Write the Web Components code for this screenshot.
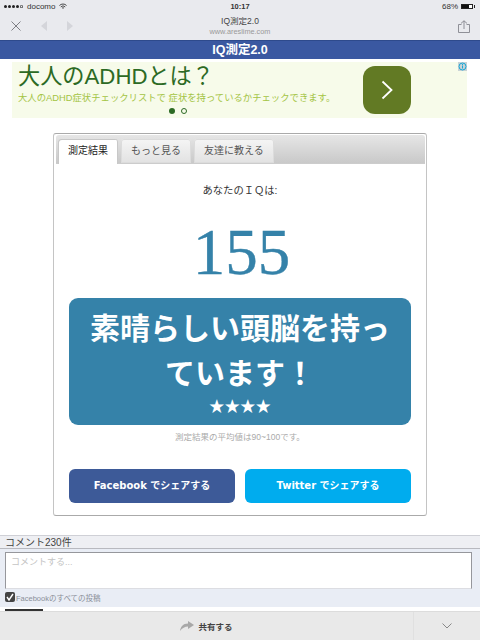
<!DOCTYPE html>
<html lang="ja">
<head>
<meta charset="utf-8">
<title>IQ測定2.0</title>
<style>
  html, body { margin: 0; height: 640px; overflow: hidden; background: #fff; }
  body { font-family: "Liberation Sans", "Noto Sans CJK JP", sans-serif; }
</style>
</head>
<body>
<browser-bar></browser-bar>
<site-title>IQ測定2.0</site-title>
<ad-banner></ad-banner>
<result-card score="155" message="素晴らしい頭脳を持っています！" stars="★★★★"></result-card>
<comment-box count="230"></comment-box>
<share-bar></share-bar>

<script>
const FONT = `"Liberation Sans", "Noto Sans CJK JP", sans-serif`;

class BrowserBar extends HTMLElement {
  constructor() {
    super();
    this.attachShadow({ mode: "open" });
    this.shadowRoot.innerHTML = /* html */`
    <style>
      :host { display: block; height: 40px; background: #e9eaee; color: #333; font-family: ${FONT}; }
      .status { height: 13px; display: grid; grid-template-columns: 1fr auto 1fr; align-items: center; padding: 0 4px 0 4px; font-size: 8px; }
      .left { display: flex; align-items: center; gap: 4px; }
      .dots { display: flex; gap: 1px; }
      .dots i { width: 3px; height: 3px; border-radius: 50%; background: #222; }
      .dots i.off { background: none; box-shadow: inset 0 0 0 .6px #222; }
      .right { display: flex; justify-content: flex-end; align-items: center; gap: 3px; }
      .battery { width: 12px; height: 5px; border: 1px solid #222; box-sizing: border-box; background: linear-gradient(90deg, #111 72%, #fff 72%); margin-right: 3px; position: relative; }
      .battery::after { content: ""; position: absolute; right: -3px; top: 0; width: 1px; height: 3px; background: #222; }
      .time { font-size: 7.5px; font-weight: bold; }
      .nav { height: 27px; display: grid; grid-template-columns: 1fr auto 1fr; align-items: start; }
      .icons { display: flex; align-items: center; padding: 8px 0 0 11px; gap: 20px; }
      .title { text-align: center; font-size: 8.5px; line-height: 11px; color: #444; padding-top: 3px; }
      .title small { display: block; font-size: 7.3px; line-height: 9px; color: #999; }
      .up { justify-self: end; padding: 7px 10px 0 0; }
      svg { display: block; }
    </style>
    <div class="status">
      <div class="left">
        <div class="dots"><i></i><i></i><i></i><i></i><i class="off"></i></div>
        <span>docomo</span>
        <svg width="8" height="7" viewBox="0 0 9 7" fill="none" stroke="#222" stroke-width=".9"><path d="M.5 2.4a5.600 5.600 0 0 1 8 0M2 4a3.500 3.500 0 0 1 5 0M3.400 5.400a1.500 1.500 0 0 1 2.200 0"/></svg>
      </div>
      <span class="time">10:17</span>
      <div class="right"><span>68%</span><div class="battery"></div></div>
    </div>
    <div class="nav">
      <div class="icons">
        <svg width="10" height="10" viewBox="0 0 10 10" stroke="#7d7e84" stroke-width="1"><path d="M.5.5l9 9M9.500.5l-9 9"/></svg>
        <svg width="6" height="10" viewBox="0 0 6 10" fill="#d4d5da"><path d="M6 0v10L0 5z"/></svg>
        <svg width="6" height="10" viewBox="0 0 6 10" fill="#d4d5da"><path d="M0 0v10l6-5z"/></svg>
      </div>
      <div class="title">IQ測定2.0<small>www.areslime.com</small></div>
      <div class="up">
        <svg width="12" height="13" viewBox="0 0 12 13" fill="none" stroke="#85868c" stroke-width=".9"><path d="M3.500 4.500H.5v8h11v-8h-3M6 9V.8M3 3.400L6 .8l3 2.600"/></svg>
      </div>
    </div>`;
  }
}

class SiteTitle extends HTMLElement {
  constructor() {
    super();
    this.attachShadow({ mode: "open" });
    this.shadowRoot.innerHTML = /* html */`
    <style>
      :host { display: block; height: 18px; background: #3a58a1; border-top: 1px solid #2e4a8c; color: #fff; text-align: center; font: bold 12.5px/18px ${FONT}; }
    </style>
    <slot></slot>`;
  }
}

class AdBanner extends HTMLElement {
  constructor() {
    super();
    this.attachShadow({ mode: "open" });
    this.shadowRoot.innerHTML = /* html */`
    <style>
      :host { display: block; margin: 3px 13px 0 12px; height: 56px; background: #f7fbea; position: relative; font-family: ${FONT}; }
      .inner { display: flex; height: 100%; padding: 0 0 0 6px; box-sizing: border-box; }
      .copy { flex: 1; min-width: 0; }
      h2 { margin: 0; padding-top: 1px; font-size: 22.2px; line-height: 27px; font-weight: normal; color: #2c6a24; white-space: nowrap; }
      p { margin: 2px 0 0; font-size: 9.35px; line-height: 12px; color: #a4c443; white-space: nowrap; }
      .go { width: 48px; height: 48px; margin: 4px 56px 0 0; border-radius: 12px; background: #627a24; display: grid; place-items: center; }
      .dots { position: absolute; left: 157px; top: 46px; display: flex; gap: 6px; }
      .dots i { width: 6px; height: 6px; border-radius: 50%; background: #2c6a24; box-sizing: border-box; }
      .dots i + i { background: none; border: 1px solid #2c6a24; }
      .info { position: absolute; right: 0; top: 0; width: 9px; height: 9px; background: #c9d3d6; }
      svg { display: block; }
    </style>
    <div class="inner">
      <div class="copy">
        <h2>大人のADHDとは？</h2>
        <p>大人のADHD症状チェックリストで 症状を持っているかチェックできます。</p>
      </div>
      <div class="go">
        <svg width="12" height="20" viewBox="0 0 12 20" fill="none" stroke="#fff" stroke-width="1.800"><path d="M1.500 1.500L10.500 10l-9 8.500"/></svg>
      </div>
    </div>
    <div class="dots"><i></i><i></i></div>
    <div class="info"><svg width="9" height="9" viewBox="0 0 9 9" fill="none" stroke="#19a7d6"><circle cx="4.500" cy="4.500" r="3.500"/><path d="M4.500 3.500v3M4.500 2v1"/></svg></div>`;
  }
}

class ResultTabs extends HTMLElement {
  constructor() {
    super();
    this.attachShadow({ mode: "open" });
    const names = (this.getAttribute("tabs") ?? "").split(",");
    this.shadowRoot.innerHTML = /* html */`
    <style>
      :host { display: flex; gap: 3px; height: 24px; margin-left: 1px; padding: 4px 0 0 2px; background: linear-gradient(#e6e6e6, #c9c9c9); border-radius: 3px 3px 0 0; border-bottom: 1px solid #ccc; font-family: ${FONT}; }
      div { height: 24px; padding: 0 10px; line-height: 24px; font-size: 10px; color: #555; background: linear-gradient(#f5f5f5, #e2e2e2); border-radius: 3px 3px 0 0; box-sizing: border-box; box-shadow: inset 0 0 0 1px #dcdcdc; }
      div.on { background: #fff; color: #222; height: 25px; box-shadow: inset 1px 1px 0 #c8c8c8, inset -1px 0 0 #c8c8c8; }
    </style>
    ${names.map((n, i) => `<div class="${i === 0 ? "on" : ""}">${n}</div>`).join("")}`;
  }
}
customElements.define("result-tabs", ResultTabs);

class ShareButton extends HTMLElement {
  constructor() {
    super();
    this.attachShadow({ mode: "open" });
    this.shadowRoot.innerHTML = /* html */`
    <style>
      :host { display: block; height: 34px; border-radius: 6px; background: var(--bg); color: #fff; text-align: center; font: bold 10px/34px "DejaVu Sans", "Noto Sans CJK JP", sans-serif; }
    </style>
    <slot></slot>`;
  }
}
customElements.define("share-button", ShareButton);

class ResultCard extends HTMLElement {
  constructor() {
    super();
    this.attachShadow({ mode: "open" });
    this.shadowRoot.innerHTML = /* html */`
    <style>
      :host { display: block; height: 383px; margin: 15px 53px 0; padding: 1px; box-sizing: border-box; border: 1px solid #c4c4c4; border-top-color: #aaa; border-bottom-color: #aaa; border-radius: 3px; font-family: ${FONT}; background: #fff; }
      .lead { margin: 21px 0 0; text-align: center; font-size: 10.3px; line-height: 12px; color: #333; }
      .score { margin: 20px 0 0; padding-left: 3px; text-align: center; font: 65px/70px "Liberation Serif", serif; color: #3582a9; -webkit-text-stroke: .4px #3582a9; }
      .body { padding: 0 14px; }
      .msg { margin-top: 11px; height: 127px; background: #3582a9; border-radius: 9px; color: #fff; text-align: center; padding: 8px 14px 0; box-sizing: border-box; }
      .msg b { display: block; font-size: 30px; line-height: 45px; font-weight: bold; }
      .msg span { display: block; font-size: 15.500px; line-height: 21px; }
      .note { margin: 7px 0 0; text-align: center; font-size: 8.500px; line-height: 10px; color: #aaa; }
      .share { display: grid; grid-template-columns: 1fr 1fr; gap: 10px; margin-top: 27px; }
    </style>
    <result-tabs tabs="測定結果,もっと見る,友達に教える"></result-tabs>
    <p class="lead">あなたのＩＱは:</p>
    <div class="score">${this.getAttribute("score")}</div>
    <div class="body">
      <div class="msg"><b>${this.getAttribute("message")}</b><span>${this.getAttribute("stars")}</span></div>
      <p class="note">測定結果の平均値は90~100です。</p>
      <div class="share">
        <share-button style="--bg:#3d5a98">Facebook でシェアする</share-button>
        <share-button style="--bg:#00acee">Twitter でシェアする</share-button>
      </div>
    </div>`;
  }
}

class CommentBox extends HTMLElement {
  constructor() {
    super();
    this.attachShadow({ mode: "open" });
    this.shadowRoot.innerHTML = /* html */`
    <style>
      :host { display: block; margin-top: 19px; font-family: ${FONT}; }
      .head { height: 12px; line-height: 13px; padding-left: 5px; font-size: 10px; color: #444; background: #eeeff3; border-top: 1px solid #cfd0d6; border-bottom: 1px solid #b8b9bf; }
      .wrap { background: #e9edf5; padding: 3px 8px 0 5px; height: 58px; box-sizing: border-box; }
      .input { height: 37px; background: #fff; box-sizing: border-box; border: 1px solid #96979c; border-bottom-color: #dcdde2; padding: 3px 5px; font-size: 9px; line-height: 12px; color: #c4c4c4; }
      label { display: flex; align-items: center; height: 16px; gap: 1px; font-size: 7.500px; color: #8a8f99; }
      .check { width: 10px; height: 10px; border-radius: 2px; background: #444; display: grid; place-items: center; }
      .peek { width: 38px; height: 2px; margin: 2px 0 0 5px; background: #333; }
    </style>
    <div class="head">コメント${this.getAttribute("count")}件</div>
    <div class="wrap">
      <div class="input">コメントする...</div>
      <label>
        <span class="check"><svg width="8" height="8" viewBox="0 0 8 8" fill="none" stroke="#fff" stroke-width="1.400"><path d="M1 4l2 3 4-6"/></svg></span>
        Facebookのすべての投稿
      </label>
    </div>
    <div class="peek"></div>`;
  }
}

class ShareBar extends HTMLElement {
  constructor() {
    super();
    this.attachShadow({ mode: "open" });
    this.shadowRoot.innerHTML = /* html */`
    <style>
      :host { display: grid; grid-template-columns: 1fr 67px; position: fixed; left: 0; right: 0; bottom: 0; height: 28px; background: #e9e9e9; border-top: 1px solid #dcdcdc; font-family: ${FONT}; }
      .main { display: flex; align-items: center; justify-content: center; gap: 4px; font-size: 8.500px; font-weight: bold; color: #444; }
      .more { display: grid; place-items: center; border-left: 1px solid #e0e0e0; }
      svg { display: block; }
    </style>
    <div class="main">
      <svg width="14" height="10" viewBox="0 0 14 10" fill="#a8a8a8"><path d="M8 0l6 4-6 4V5.500C5 5.500 2 7 0 10c.5-4 3-7.500 8-7.500z"/></svg>
      共有する
    </div>
    <div class="more">
      <svg width="10" height="6" viewBox="0 0 10 6" fill="none" stroke="#888" stroke-width="1"><path d="M.5.5L5 5 9.500.5"/></svg>
    </div>`;
  }
}

customElements.define("browser-bar", BrowserBar);
customElements.define("site-title", SiteTitle);
customElements.define("ad-banner", AdBanner);
customElements.define("result-card", ResultCard);
customElements.define("comment-box", CommentBox);
customElements.define("share-bar", ShareBar);
</script>
</body>
</html>
